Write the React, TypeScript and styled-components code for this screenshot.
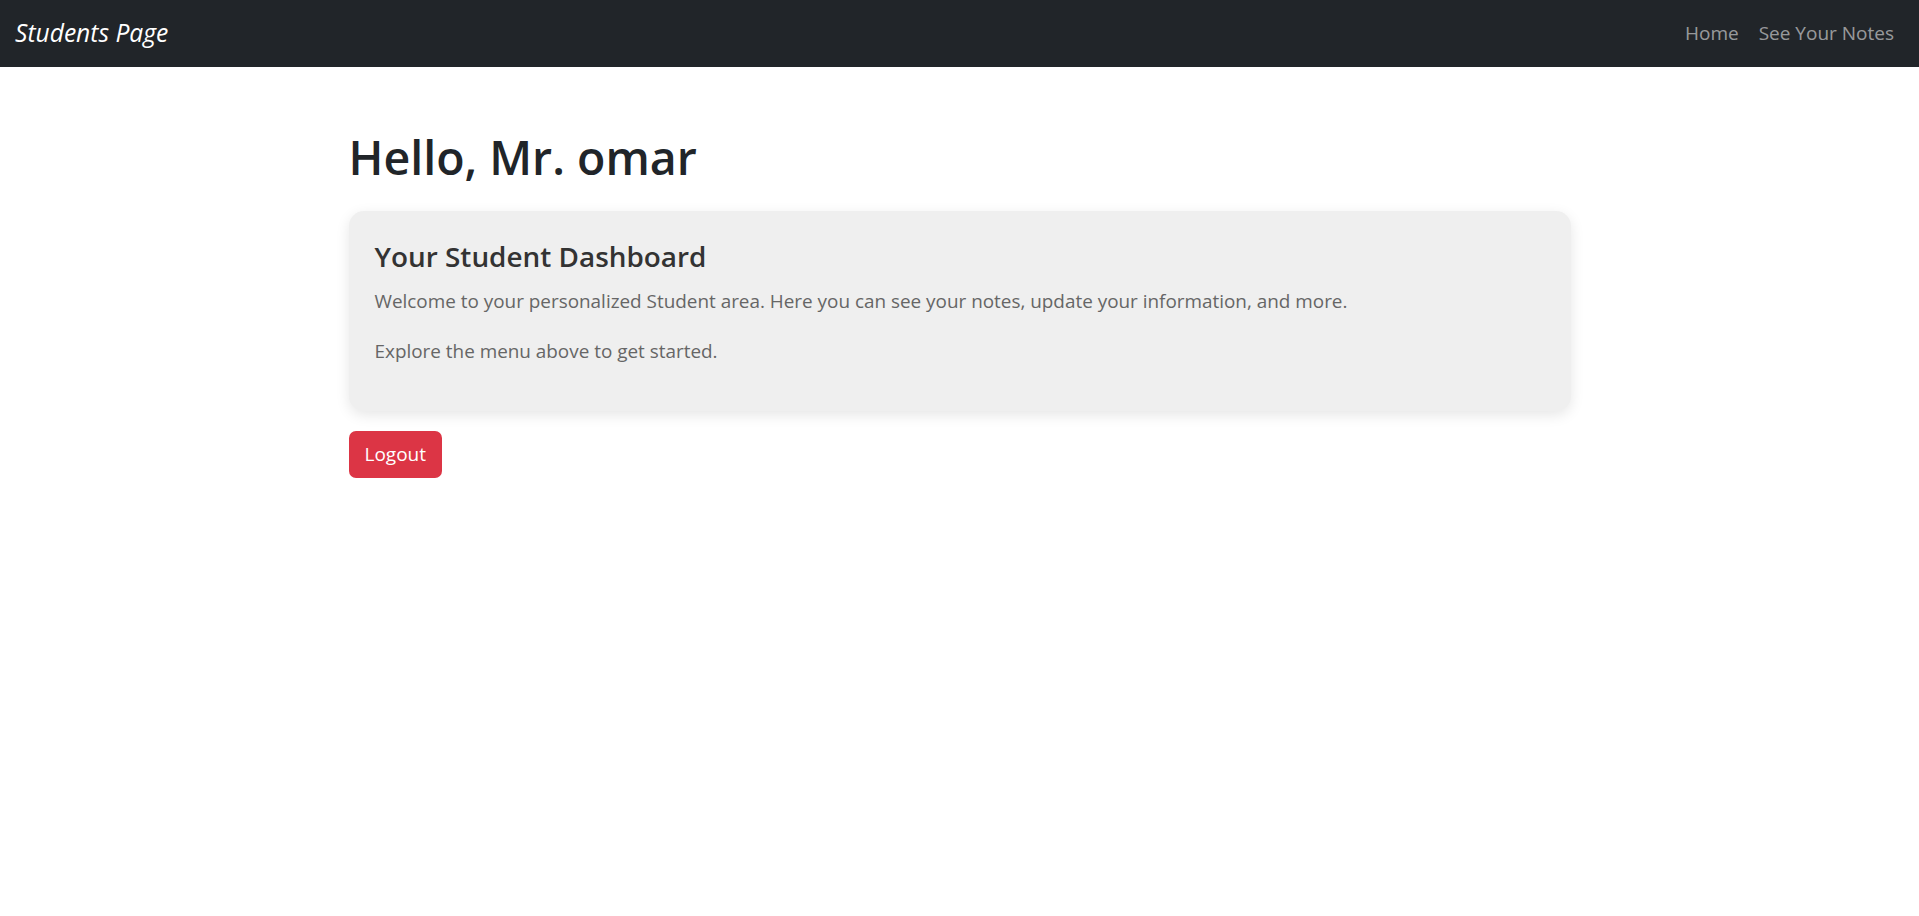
import React from "react";
import styled, { createGlobalStyle } from "styled-components";

const GlobalStyle = createGlobalStyle`
  html, body {
    margin: 0;
    padding: 0;
    background: #ffffff;
  }
  body {
    font-family: "Open Sans", "Noto Sans", "Liberation Sans", sans-serif;
    font-size: 20px;
    line-height: 1.5;
    color: #212529;
  }
  * { box-sizing: border-box; }
`;

const NavBar = styled.nav`
  height: 67px;
  background: #212529;
  display: flex;
  align-items: center;
  justify-content: space-between;
  padding: 0 15px;
`;

const Brand = styled.a`
  color: #ffffff;
  font-style: italic;
  font-size: 24.6px;
  text-decoration: none;
  line-height: 1;
`;

const NavLinks = styled.div`
  display: flex;
  align-items: center;
`;

const NavLink = styled.a`
  color: rgba(255, 255, 255, 0.55);
  font-size: 19px;
  padding: 0 10px;
  text-decoration: none;
`;

const Container = styled.main`
  width: 1222px;
  margin: 0 auto;
  padding-top: 62px;
`;

const Heading = styled.h1`
  font-size: 46.5px;
  font-weight: 600;
  line-height: 57.6px;
  margin: 0 0 24px;
  color: #212529;
`;

const Card = styled.section`
  background: #efefef;
  border-radius: 15px;
  box-shadow: 0 4px 14px rgba(0, 0, 0, 0.1);
  padding: 28px 26px 25px;
`;

const CardTitle = styled.h2`
  font-size: 27.9px;
  font-weight: 600;
  line-height: 35px;
  margin: 0 0 12px;
  color: #333333;
`;

const CardText = styled.p`
  font-size: 18.9px;
  line-height: 30px;
  margin: 0 0 20px;
  color: #666666;
`;

const LogoutButton = styled.button`
  margin-top: 20px;
  height: 47px;
  padding: 0 16px;
  background: #dc3545;
  color: #ffffff;
  border: none;
  border-radius: 7px;
  font-family: inherit;
  font-size: 19px;
  cursor: pointer;
`;

export default function App() {
  return (
    <>
      <GlobalStyle />
      <NavBar>
        <Brand href="#">Students Page</Brand>
        <NavLinks>
          <NavLink href="#">Home</NavLink>
          <NavLink href="#">See Your Notes</NavLink>
        </NavLinks>
      </NavBar>
      <Container>
        <Heading>Hello, Mr. omar</Heading>
        <Card>
          <CardTitle>Your Student Dashboard</CardTitle>
          <CardText>
            Welcome to your personalized Student area. Here you can see your notes, update your information, and more.
          </CardText>
          <CardText>Explore the menu above to get started.</CardText>
        </Card>
        <LogoutButton>Logout</LogoutButton>
      </Container>
    </>
  );
}
